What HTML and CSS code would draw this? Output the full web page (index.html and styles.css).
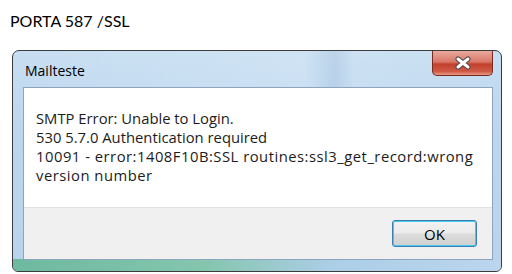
FILE: index.html
```html
<!DOCTYPE html>
<html>
<head>
<meta charset="utf-8">
<link rel="stylesheet" href="styles.css">
</head>
<body>
<p class="caption">PORTA 587 /SSL</p>
<div class="window">
  <div class="titlebar">
    <span class="title">Mailteste</span>
    <button class="close" aria-label="Fechar">
      <svg width="20" height="14" viewBox="0 0 20 14">
        <path d="M5 3 L15 11 M15 3 L5 11" stroke="#4a4a4a" stroke-width="5" stroke-linecap="round"/>
        <path d="M5 3 L15 11 M15 3 L5 11" stroke="#ffffff" stroke-width="3" stroke-linecap="round"/>
      </svg>
    </button>
  </div>
  <div class="client">
    <div class="message">
      <p>SMTP Error: Unable to Login.</p>
      <p>530 5.7.0 Authentication required</p>
      <p class="wide">10091 - error:1408F10B:SSL routines:ssl3_get_record:wrong version number</p>
    </div>
    <div class="footer">
      <button class="ok">OK</button>
    </div>
  </div>
</div>
</body>
</html>
```
FILE: styles.css
```css
html, body {
  margin: 0;
  padding: 0;
  background: #ffffff;
}
body {
  width: 512px;
  height: 274px;
  overflow: hidden;
}
.caption {
  margin: 0;
  padding: 11px 0 0 10px;
  height: 50px;
  box-sizing: border-box;
  font-family: Lato, "Open Sans", sans-serif;
  font-size: 16px;
  line-height: 20px;
  color: #000;
}
.window {
  margin-left: 12px;
  width: 490px;
  height: 222px;
  box-sizing: border-box;
  border: 1px solid #3c3c3c;
  border-radius: 7px 7px 6px 6px;
  background: linear-gradient(180deg, #c7def2 0%, #bcd6ee 40%, #b9d3ec 100%);
  display: flex;
  flex-direction: column;
  position: relative;
  overflow: hidden;
}
.window::after {
  content: "";
  position: absolute;
  left: 0;
  right: 0;
  bottom: 0;
  height: 12px;
  background: linear-gradient(90deg, #5fb592 0%, #7cc3a4 40%, #a9cde6 65%, #bcd6ee 100%);
  opacity: 0.85;
  pointer-events: none;
}
.titlebar {
  height: 36px;
  display: flex;
  justify-content: space-between;
  align-items: flex-start;
  padding: 0 8px 0 12px;
  background: linear-gradient(90deg, rgba(255,255,255,0) 0%, rgba(255,255,255,0.15) 60%, rgba(150,180,210,0.25) 66%, rgba(255,255,255,0.1) 70%, rgba(255,255,255,0) 100%);
}
.title {
  font-family: "Open Sans", "Noto Sans", sans-serif;
  font-size: 14px;
  line-height: 20px;
  padding-top: 10px;
  color: #000;
}
.close {
  width: 61px;
  height: 25px;
  margin: 0;
  padding: 0;
  border: 1px solid #7a2a20;
  border-top: none;
  border-radius: 0 0 5px 5px;
  background: linear-gradient(180deg, #e9a99b 0%, #d9786a 45%, #c3402c 55%, #cf5a45 85%, #e69a88 100%);
  display: flex;
  align-items: center;
  justify-content: center;
}
.client {
  flex: 1;
  margin: 0 8px 11px 10px;
  border: 1px solid #8ea4bd;
  display: flex;
  flex-direction: column;
  position: relative;
  z-index: 1;
}
.message {
  flex: 1;
  background: #ffffff;
  padding: 21px 12px 0 12px;
  font-family: "Open Sans", "Noto Sans", sans-serif;
  font-size: 14.8px;
  line-height: 19px;
  color: #1c1c1c;
}
.message p {
  margin: 0;
}
.message .wide {
  width: 440px;
  letter-spacing: 0.5px;
}
.footer {
  height: 52px;
  box-sizing: border-box;
  background: #f0f0f0;
  border-top: 1px solid #dfdfdf;
  display: flex;
  justify-content: flex-end;
  align-items: flex-start;
  padding: 12px 15px 0 0;
}
.ok {
  width: 85px;
  height: 27px;
  margin: 0;
  padding: 0;
  border: 1px solid #3c7fb1;
  border-radius: 3px;
  box-shadow: inset 0 0 0 1px #48c7f2;
  background: linear-gradient(180deg, #f2f2f2 0%, #ebebeb 48%, #dddddd 52%, #cfcfcf 100%);
  font-family: "Open Sans", "Noto Sans", sans-serif;
  font-size: 15px;
  color: #000;
}
```
